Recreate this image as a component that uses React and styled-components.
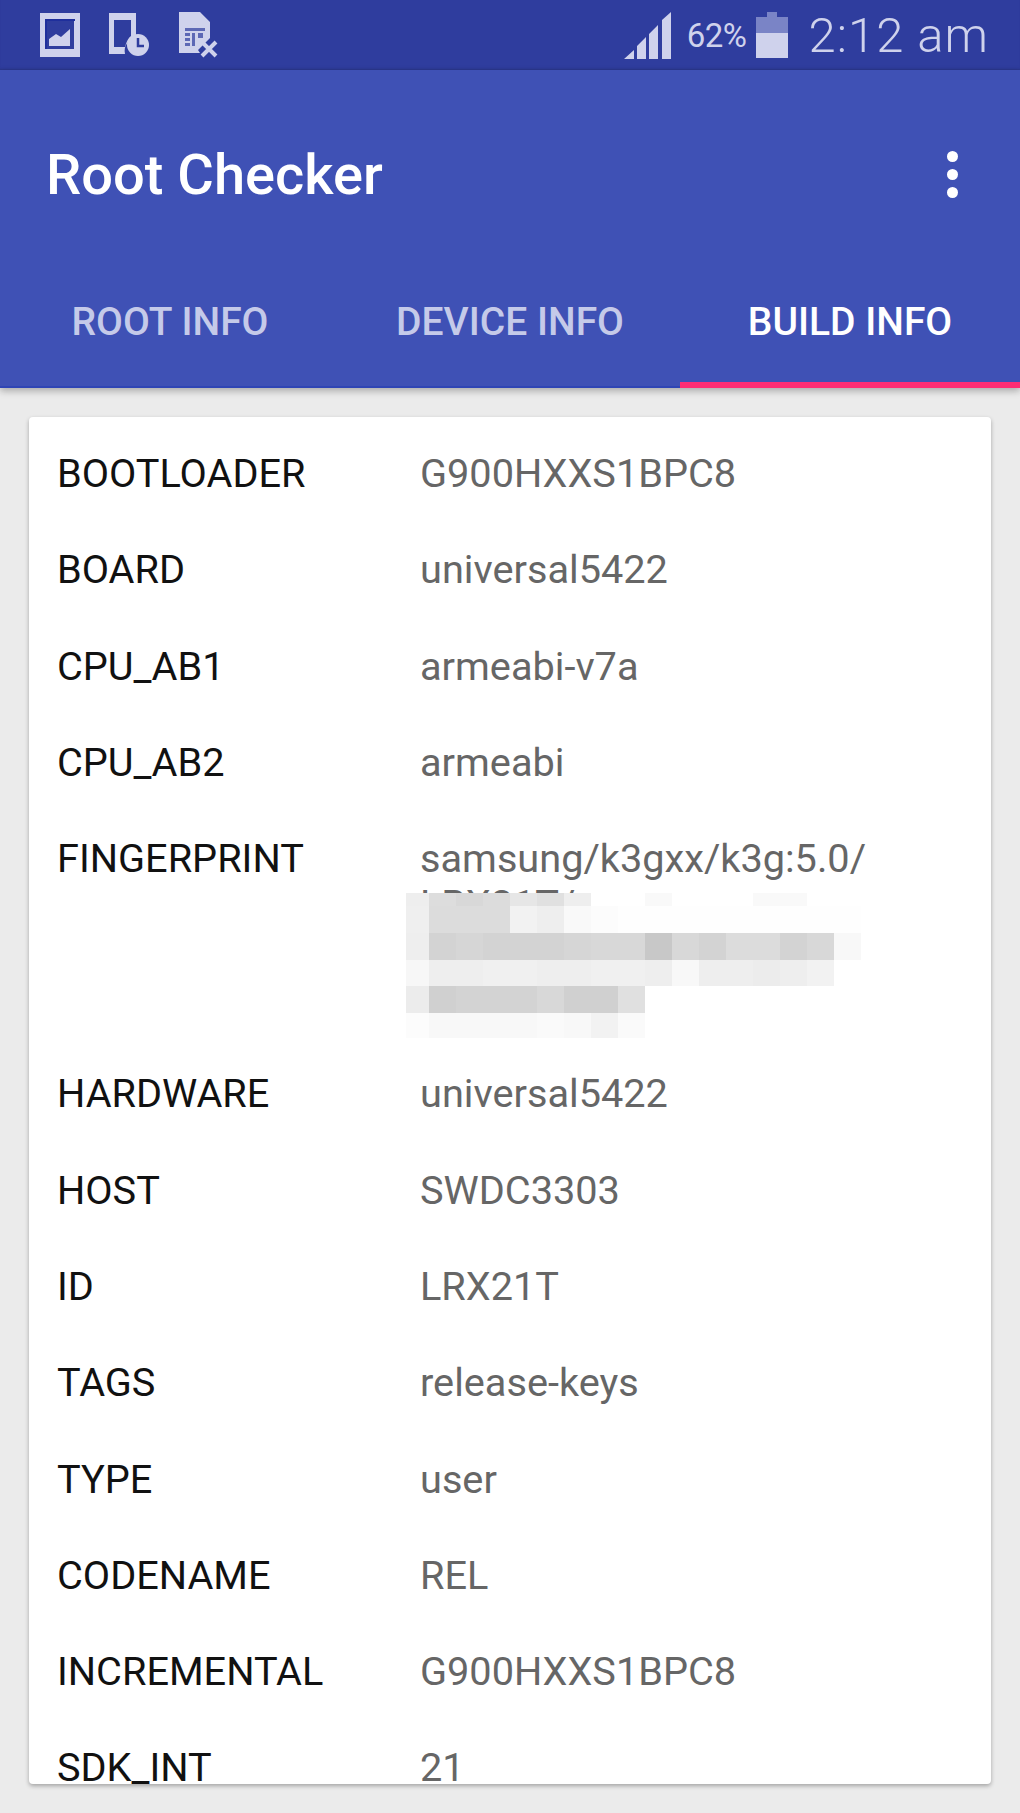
import React from "react"
import styled, { createGlobalStyle } from "styled-components"

const GlobalStyle = createGlobalStyle`
  html, body {
    margin: 0;
    padding: 0;
    background: #ebebeb;
  }
  * {
    box-sizing: border-box;
  }
`

const Screen = styled.div`
  width: 1020px;
  height: 1813px;
  overflow: hidden;
  display: flex;
  flex-direction: column;
  background: #ebebeb;
  font-family: Roboto, "Liberation Sans", sans-serif;
`

const StatusBar = styled.div`
  height: 70px;
  flex: none;
  display: flex;
  align-items: center;
  padding: 0 31px 0 40px;
  background: #2f3d9e;
  box-shadow: inset 0 -2px 2px -1px #2a3689;
  color: #cfd2ec;
`

const NotifyIcons = styled.div`
  display: flex;
  gap: 28px;
  align-items: center;
  margin-right: auto;
`

const Icon = styled.svg`
  display: block;
  flex: none;
  width: ${props => props.$w}px;
  height: ${props => props.$h}px;
  margin-left: ${props => props.$ml || 0}px;
`

const Percent = styled.span`
  font-size: 33px;
  letter-spacing: -0.5px;
  margin-left: 15px;
`

const Clock = styled.span`
  font-size: 49px;
  font-weight: 300;
  letter-spacing: 1px;
  margin-left: 21px;
`

const AppBar = styled.header`
  flex: none;
  height: 318px;
  display: flex;
  flex-direction: column;
  position: relative;
  z-index: 1;
  background: #3f51b5;
  box-shadow: 0 3px 7px rgba(0, 0, 0, 0.28);
`

const TitleRow = styled.div`
  height: 210px;
  display: flex;
  align-items: center;
  justify-content: space-between;
  padding: 0 62px 0 46px;
`

const Title = styled.h1`
  margin: 0;
  font-size: 56px;
  font-weight: 500;
  color: #fff;
`

const Dots = styled.div`
  display: flex;
  flex-direction: column;
  gap: 7px;
  margin-top: -2px;
`

const Dot = styled.span`
  width: 11px;
  height: 11px;
  border-radius: 50%;
  background: #fff;
`

const Tabs = styled.nav`
  flex: 1;
  display: grid;
  grid-template-columns: repeat(3, 1fr);
`

const Tab = styled.div`
  display: flex;
  justify-content: center;
  padding-top: 21px;
  font-size: 39px;
  font-weight: 500;
  line-height: 42px;
  color: ${props => (props.$active ? "#fff" : "#c5cae9")};
  border-bottom: ${props =>
    props.$active ? "6px solid #ff2d74" : "2px solid #2f45b5"};
`

const Content = styled.main`
  flex: 1;
  min-height: 0;
  padding: 29px 29px 29px;
`

const Card = styled.section`
  height: 100%;
  overflow: hidden;
  padding: 34px 28px 0;
  background: #fff;
  border-radius: 4px;
  box-shadow: 0 2px 4px rgba(0, 0, 0, 0.3);
`

const InfoRow = styled.div`
  display: grid;
  grid-template-columns: 363px 1fr;
  margin-bottom: 50px;
  font-size: 39.7px;
  line-height: 46.3px;
`

const Label = styled.div`
  color: #111;
`

const Value = styled.div`
  position: relative;
  color: #666;
  min-height: ${props => (props.$lines || 1) * 46.3}px;
`

const Mosaic = styled.svg`
  position: absolute;
  left: -14px;
  top: 57px;
  display: block;
`

const rows = [
  ["BOOTLOADER", "G900HXXS1BPC8"],
  ["BOARD", "universal5422"],
  ["CPU_AB1", "armeabi-v7a"],
  ["CPU_AB2", "armeabi"],
  ["FINGERPRINT", "samsung/k3gxx/k3g:5.0/ LRX21T/", 4],
  ["HARDWARE", "universal5422"],
  ["HOST", "SWDC3303"],
  ["ID", "LRX21T"],
  ["TAGS", "release-keys"],
  ["TYPE", "user"],
  ["CODENAME", "REL"],
  ["INCREMENTAL", "G900HXXS1BPC8"],
  ["SDK_INT", "21"],
]

const columnX = [0, 23, 50, 77, 104, 131, 158, 185, 212, 239, 266, 293, 320, 347, 374, 401, 428, 455]
const bandY = [0, 13, 40, 67, 93, 120, 145]

// grey level of every cell of the blurred part, one array per band
const bands = [
  ["ee", "dd", "d8", "dc", "e6", "e0", "ee", "ff", "ff", "f9", "ff", "ff", "ff", "f9", "f9", "ff", "ff"],
  ["ef", "dc", "dc", "dc", "f2", "ee", "f9", "fc", "fe", "fe", "fe", "fe", "fe", "fe", "fe", "fe", "fe"],
  ["ee", "d3", "d6", "d3", "d3", "d3", "d6", "d8", "d8", "c8", "d8", "d3", "dc", "dc", "d3", "d8", "f8"],
  ["f7", "ee", "ee", "f0", "f0", "ee", "ee", "f0", "f0", "ee", "f8", "ee", "ee", "ec", "ee", "f2", "ff"],
  ["ec", "d0", "d3", "d3", "d3", "d8", "d0", "d0", "e0", "ff", "ff", "ff", "ff", "ff", "ff", "ff", "ff"],
  ["fc", "f8", "f8", "f8", "f8", "fa", "f8", "f2", "fa", "ff", "ff", "ff", "ff", "ff", "ff", "ff", "ff"],
]

const BlurredText = () => (
  <Mosaic width="455" height="145" viewBox="0 0 455 145" aria-hidden="true" shapeRendering="crispEdges">
    {bands.map((band, r) =>
      band.map((grey, c) => (
        <rect
          key={`${r}-${c}`}
          x={columnX[c]}
          y={bandY[r]}
          width={columnX[c + 1] - columnX[c]}
          height={bandY[r + 1] - bandY[r]}
          fill={`#${grey}${grey}${grey}`}
        />
      ))
    )}
  </Mosaic>
)

const GalleryIcon = () => (
  <Icon $w={40} $h={44} viewBox="0 0 40 44">
    <path fill="#cfd2ec" fillRule="evenodd" d="M0 0h40v44H0zM6 7v29h28V7z" />
    <path fill="#1f2f9c" d="M5 6h30v2H7v28H5z" />
    <path fill="#cfd2ec" d="M9 33v-7l7-5 5 3 9-8v17z" />
  </Icon>
)

const DeviceClockIcon = () => (
  <Icon $w={42} $h={44} viewBox="0 0 42 44">
    <path fill="#cfd2ec" fillRule="evenodd" d="M1 0h27v25a13 13 0 0 0-11 16H1zM6 7v27h11q2-8 6-11V7z" />
    <path fill="#cfd2ec" d="M12 36h4v3h-4z" />
    <circle cx="30" cy="32" r="11" fill="#cfd2ec" />
    <path fill="none" stroke="#2f3d9e" strokeWidth="2.5" d="M30 25v8h6" />
  </Icon>
)

const SimErrorIcon = () => (
  <Icon $w={42} $h={46} viewBox="0 0 42 46">
    <path fill="#cfd2ec" d="M1 0h21l10 10v16l-12 12 2 3H1z" />
    <path fill="#5d68b5" d="M7 16h20v3H7zM7 21h5v3H7zM7 26h5v3H7zM7 31h5v3H7zM14 21h3v13h-3zM20 21h5v5h-5z" />
    <path stroke="#cfd2ec" strokeWidth="4" d="M24 30l14 14M38 30L24 44" />
  </Icon>
)

const SignalIcon = () => (
  <Icon $w={48} $h={47} viewBox="0 0 48 47">
    <path fill="#cfd2ec" d="M0 47l10-9v9zM13 47V34l9-9v22zM25 47V22l9-9v34zM38 47V8l9-8v47z" />
  </Icon>
)

const BatteryIcon = () => (
  <Icon $w={32} $h={46} $ml={9} viewBox="0 0 32 46">
    <path fill="#7a84c6" d="M11 0h10v5h11v16H0V5h11z" />
    <path fill="#cfd2ec" d="M0 21h32v25H0z" />
  </Icon>
)

export default function App() {
  return (
    <Screen>
      <GlobalStyle />
      <StatusBar>
        <NotifyIcons>
          <GalleryIcon />
          <DeviceClockIcon />
          <SimErrorIcon />
        </NotifyIcons>
        <SignalIcon />
        <Percent>62%</Percent>
        <BatteryIcon />
        <Clock>2:12 am</Clock>
      </StatusBar>
      <AppBar>
        <TitleRow>
          <Title>Root Checker</Title>
          <Dots>
            <Dot />
            <Dot />
            <Dot />
          </Dots>
        </TitleRow>
        <Tabs>
          <Tab>ROOT INFO</Tab>
          <Tab>DEVICE INFO</Tab>
          <Tab $active>BUILD INFO</Tab>
        </Tabs>
      </AppBar>
      <Content>
        <Card>
          {rows.map(([label, value, lines]) => (
            <InfoRow key={label}>
              <Label>{label}</Label>
              <Value $lines={lines}>
                {value}
                {lines && <BlurredText />}
              </Value>
            </InfoRow>
          ))}
        </Card>
      </Content>
    </Screen>
  )
}
